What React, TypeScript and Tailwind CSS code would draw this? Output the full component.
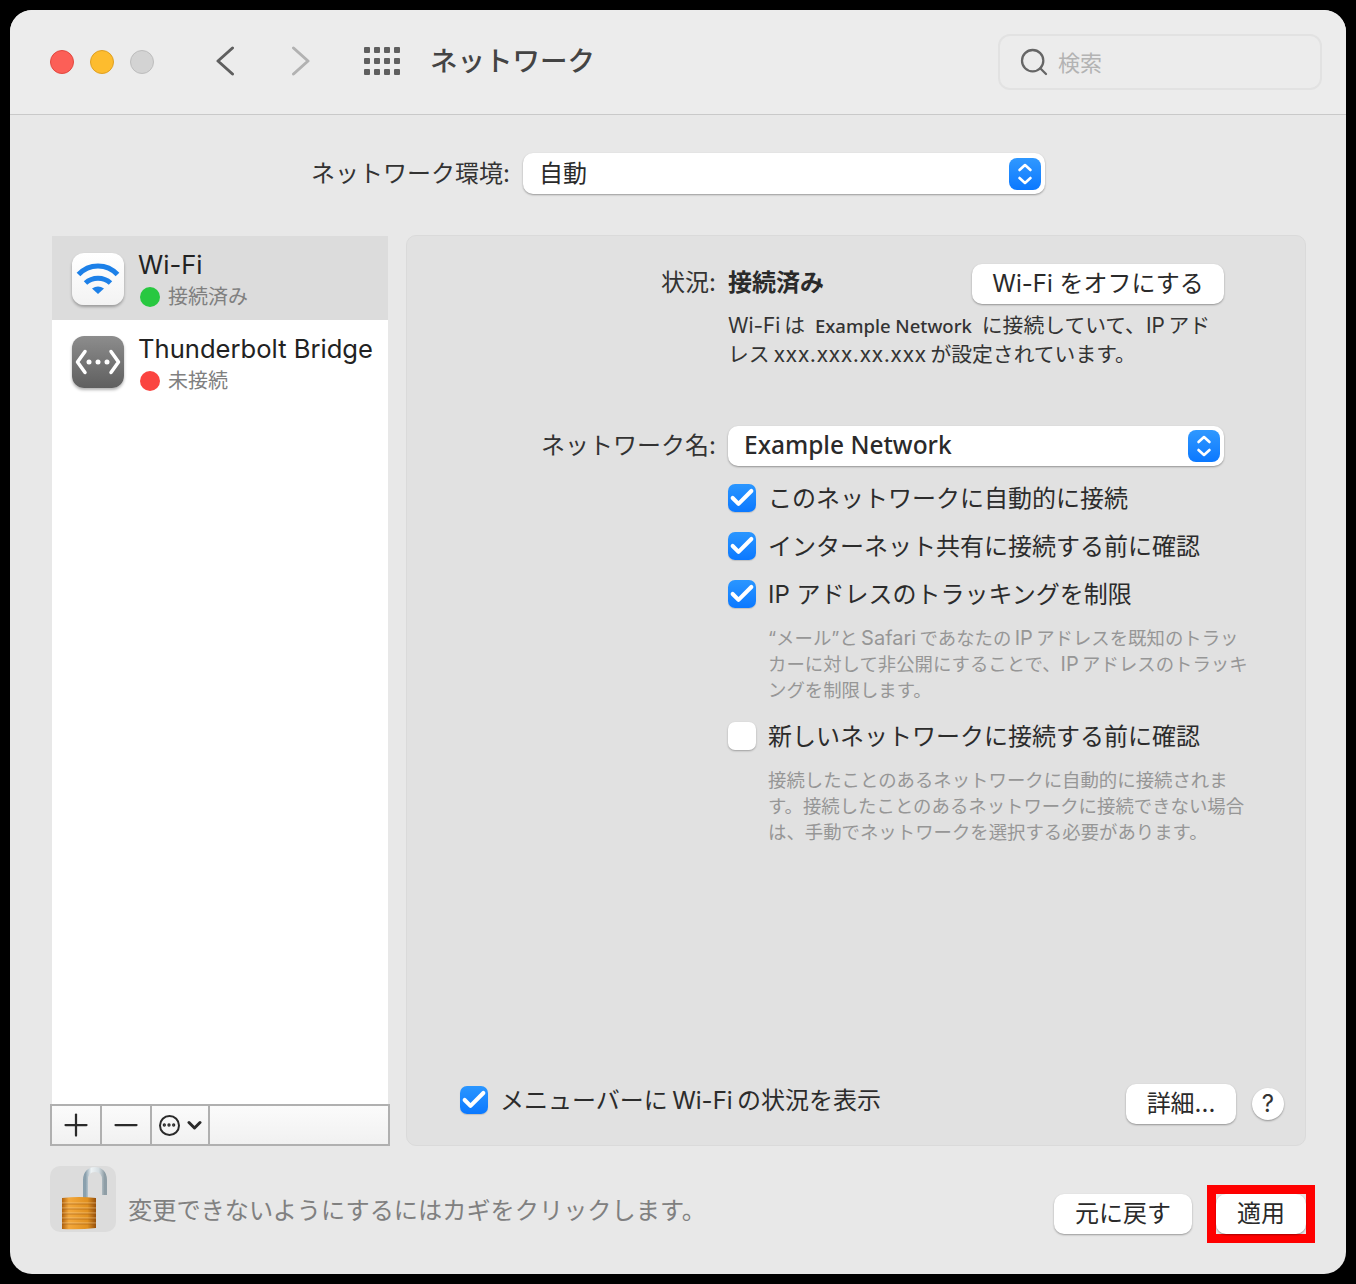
import React from 'react';
import { Check, Ellipsis, Minus, Plus, Search } from 'lucide-react';

const FONT = "font-['Inter','Noto_Sans_CJK_JP',sans-serif]";
const THIN = '\u2009';

const Updown = ({ className = '' }: { className?: string }) => (
  <div className={`w-8 h-8 rounded-lg bg-gradient-to-b from-[#2f98ff] to-[#0a78ff] flex items-center justify-center ${className}`}>
    <svg width="18" height="24" viewBox="0 0 18 24" fill="none" stroke="#fff" strokeWidth="2.6" strokeLinecap="round" strokeLinejoin="round">
      <path d="M3.5 8 9 3l5.500 5" />
      <path d="M3.500 16 9 21l5.500-5" />
    </svg>
  </div>
);

const PopButton = ({ className = '', children }: { className?: string; children: React.ReactNode }) => (
  <button className={`h-10 rounded-[10px] bg-white shadow-[0_1px_2px_rgba(0,0,0,0.35)] text-[24px] text-[#2a2a2a] flex items-center justify-center ${className}`}>
    {children}
  </button>
);

const CheckRow = ({ checked = true, children }: { checked?: boolean; children: React.ReactNode }) => (
  <div className="h-12 flex items-center">
    {checked ? (
      <div className="w-7 h-7 rounded-[7px] bg-gradient-to-b from-[#2a96ff] to-[#0a78ff] flex items-center justify-center shadow-[0_1px_1px_rgba(0,0,0,0.15)]">
        <Check className="w-7 h-7 text-white shrink-0" strokeWidth={3.5} />
      </div>
    ) : (
      <div className="w-7 h-7 rounded-[7px] bg-white shadow-[0_1px_2px_rgba(0,0,0,0.3)]" />
    )}
    <span className="ml-3 pt-[2px] text-[24px] leading-8 text-[#2c2c2c]">{children}</span>
  </div>
);

const NavChevron = ({ d, color, className = '' }: { d: string; color: string; className?: string }) => (
  <svg width="20" height="30" viewBox="0 0 20 30" fill="none" stroke={color} strokeWidth="3" strokeLinecap="round" strokeLinejoin="round" className={className}>
    <path d={d} />
  </svg>
);

const WifiIcon = () => (
  <div className="w-[52px] h-[52px] rounded-xl bg-gradient-to-b from-white to-[#f3f3f3] shadow-[0_2px_3px_rgba(0,0,0,0.3)] flex items-center justify-center">
    <svg width="46" height="34" viewBox="0 0 46 34" fill="none" stroke="#1c80e8" strokeWidth="5">
      <path d="M3.500 12.500C14 1 32 1 42.500 12.500" />
      <path d="M10.500 21C17.500 14.500 28.500 14.500 35.500 21" />
      <path d="M23 32l-6-5.500q6-4 12 0z" fill="#1c80e8" stroke="none" />
    </svg>
  </div>
);

const BridgeIcon = () => (
  <div className="w-[52px] h-[52px] rounded-xl bg-gradient-to-b from-[#8d8d8d] to-[#5f5f5f] shadow-[0_2px_3px_rgba(0,0,0,0.3)] flex items-center justify-center">
    <svg width="46" height="26" viewBox="0 0 46 26" fill="none" stroke="#fff" strokeWidth="3.500" strokeLinecap="round" strokeLinejoin="round">
      <path d="M10 2.500 2.500 13 10 23.500" />
      <path d="M36 2.500 43.500 13 36 23.500" />
      <circle cx="14" cy="13" r="2.500" fill="#fff" stroke="none" />
      <circle cx="23" cy="13" r="2.500" fill="#fff" stroke="none" />
      <circle cx="32" cy="13" r="2.500" fill="#fff" stroke="none" />
    </svg>
  </div>
);

const LockIcon = () => (
  <div className="w-[66px] h-[66px] rounded-[10px] bg-[#dcdcdc] shrink-0">
    <svg width="66" height="66" viewBox="0 0 66 66" fill="none">
      <defs>
        <linearGradient id="shackle" x1="0" y1="0" x2="1" y2="0">
          <stop offset="0" stopColor="#8aa0ad" />
          <stop offset="0.3" stopColor="#eef3f5" />
          <stop offset="0.7" stopColor="#d5dde1" />
          <stop offset="1" stopColor="#8f9ea6" />
        </linearGradient>
        <linearGradient id="brass" x1="0" y1="0" x2="1" y2="0">
          <stop offset="0" stopColor="#b0620f" />
          <stop offset="0.2" stopColor="#f3a83c" />
          <stop offset="0.75" stopColor="#e0901f" />
          <stop offset="1" stopColor="#96500c" />
        </linearGradient>
      </defs>
      <path d="M35.500 32V14C35.500 7 40 3.500 45 3.500S54.500 7 54.500 14v15" stroke="url(#shackle)" strokeWidth="5" />
      <path d="M12 32q17-2 34 0v30q-17 2-34 1z" fill="url(#brass)" />
      <path d="M12 37h34M12 42h34M12 47h34M12 52h34M12 57h34" stroke="#f8cf8f" strokeOpacity="0.6" strokeWidth="1" />
      <path d="M12 38h34M12 43h34M12 48h34M12 53h34M12 58h34" stroke="#9a5510" strokeOpacity="0.5" strokeWidth="1" />
    </svg>
  </div>
);

export default function App() {
  return (
    <div className={`min-h-screen h-[1284px] bg-black p-2.5 ${FONT}`}>
      <div className="w-[1336px] h-[1264px] rounded-[22px] bg-[#e8e8e8] overflow-hidden flex flex-col">
        {/* Title bar */}
        <div className="h-[105px] shrink-0 bg-[#ececec] border-b border-[#c9c9c9] flex items-center pl-10 pr-6">
          <div className="flex gap-4">
            <div className="w-6 h-6 rounded-full bg-[#fc5f57] border border-[#e2483f]" />
            <div className="w-6 h-6 rounded-full bg-[#fdbc2e] border border-[#dfa023]" />
            <div className="w-6 h-6 rounded-full bg-[#d3d3d3] border border-[#bdbdbd]" />
          </div>
          <NavChevron className="ml-[61px] -mt-[2px]" d="M17.500 2 3 15l14.500 13" color="#5f5f5f" />
          <NavChevron className="ml-[56px] -mt-[2px]" d="M2.500 2 17 15 2.500 28" color="#b2b2b2" />
          <div className="ml-[53px] -mt-[2px] grid grid-cols-4 gap-x-1 gap-y-[5px]">
            {Array.from({ length: 12 }).map((_, i) => (
              <div key={i} className="w-[6px] h-[6px] rounded-[1px] bg-[#5f5f5f]" />
            ))}
          </div>
          <div className="ml-[30px] text-[27.5px] font-medium text-[#444]">ネットワーク</div>
          <div className="ml-auto w-[324px] h-14 rounded-xl border-2 border-[#e2e2e2] flex items-center pl-[18px]">
            <Search className="w-8 h-8 text-[#666]" strokeWidth={1.7} />
            <span className="ml-2 pt-[2px] text-[22px] text-[#b3b3b3]">検索</span>
          </div>
        </div>

        {/* Body */}
        <div className="flex-1 px-10 pt-[38px]">
          <div className="flex items-center h-[41px]">
            <div className="w-[460px] text-right text-[24px] text-[#333]">ネットワーク環境:</div>
            <div className="ml-[13px] w-[522px] h-[41px] rounded-[10px] bg-white shadow-[0_1px_2px_rgba(0,0,0,0.35)] flex items-center pl-4 pr-1">
              <span className="text-[24px] text-[#2a2a2a]">自動</span>
              <Updown className="ml-auto" />
            </div>
          </div>

          <div className="mt-[41px] flex gap-4 h-[911px]">
            {/* Sidebar */}
            <div className="w-[340px] flex flex-col">
              <div className="flex-1 bg-white mx-[2px] mt-[1px]">
                <div className="h-[84px] bg-[#dcdcdc] flex items-start pl-5 pt-[17px]">
                  <WifiIcon />
                  <div className="ml-[14px] -mt-[4px]">
                    <div className="text-[25.6px] leading-8 text-[#222]">Wi-Fi</div>
                    <div className="flex items-center mt-1">
                      <div className="w-5 h-5 rounded-full bg-[#28c840] ml-[2px]" />
                      <span className="ml-2 text-[20px] leading-6 text-[#808080]">接続済み</span>
                    </div>
                  </div>
                </div>
                <div className="h-[84px] flex items-start pl-5 pt-4">
                  <BridgeIcon />
                  <div className="ml-[14px] -mt-[3px]">
                    <div className="text-[25.6px] leading-8 text-[#222] whitespace-nowrap">Thunderbolt Bridge</div>
                    <div className="flex items-center mt-1">
                      <div className="w-5 h-5 rounded-full bg-[#fb4440] ml-[2px]" />
                      <span className="ml-2 text-[20px] leading-6 text-[#808080]">未接続</span>
                    </div>
                  </div>
                </div>
              </div>
              <div className="h-[42px] border-2 border-[#b0b0b0] bg-gradient-to-b from-[#fbfbfb] to-[#f1f1f1] flex">
                <div className="w-[50px] border-r-2 border-[#b0b0b0] flex items-center justify-center">
                  <Plus className="w-[36px] h-[36px] text-[#2a2a2a] shrink-0" strokeWidth={1.5} />
                </div>
                <div className="w-[50px] border-r-2 border-[#b0b0b0] flex items-center justify-center">
                  <Minus className="w-[36px] h-[36px] text-[#2a2a2a] shrink-0" strokeWidth={1.5} />
                </div>
                <div className="w-[58px] border-r-2 border-[#b0b0b0] flex items-center justify-center gap-[7px]">
                  <div className="w-[21px] h-[21px] rounded-full border-2 border-[#2a2a2a] flex items-center justify-center">
                    <Ellipsis className="w-4 h-4 text-[#2a2a2a]" strokeWidth={3} />
                  </div>
                  <svg width="15" height="10" viewBox="0 0 15 10" fill="none" stroke="#2a2a2a" strokeWidth="3" strokeLinecap="round" strokeLinejoin="round">
                    <path d="M2 2.500 7.500 8 13 2.500" />
                  </svg>
                </div>
              </div>
            </div>

            {/* Wi-Fi pane */}
            <div className="w-[900px] rounded-[10px] bg-[#e1e1e1] border border-[#dadada] flex flex-col">
              <div className="pt-[28px] flex-1">
                <div className="flex">
                  <div className="w-[309px] h-10 pb-[2px] flex items-center justify-end text-[24px] text-[#333]">状況:</div>
                  <div className="ml-3 w-[496px]">
                    <div className="flex items-center justify-between h-10">
                      <span className="pb-[2px] text-[24px] font-bold text-[#2a2a2a]">接続済み</span>
                      <PopButton className="w-[252px]">Wi-Fi をオフにする</PopButton>
                    </div>
                    <div className="mt-2 text-[20.800px] leading-7 text-[#333] whitespace-nowrap">
                      Wi-Fi{THIN}は<span className="ml-[10px] mr-[10px] font-['Noto_Sans','Noto_Sans_CJK_JP',sans-serif] font-medium text-[18.500px]">Example Network</span>に接続していて、IP{THIN}アド<br />
                      レス{THIN}<span className="text-[21.500px] tracking-[0.4px]">xxx.xxx.xx.xxx</span>{THIN}が設定されています。
                    </div>
                  </div>
                </div>

                <div className="flex mt-[57px]">
                  <div className="w-[309px] h-10 flex items-center justify-end text-[24px] text-[#333]">ネットワーク名:</div>
                  <div className="ml-3 w-[496px] h-10 rounded-[10px] bg-white shadow-[0_1px_2px_rgba(0,0,0,0.35)] flex items-center pl-4 pr-1">
                    <span className="pb-[2px] font-['Noto_Sans','Noto_Sans_CJK_JP',sans-serif] font-medium text-[24.500px] text-[#2a2a2a]">Example Network</span>
                    <Updown className="ml-auto" />
                  </div>
                </div>

                <div className="ml-[321px] mt-2">
                  <CheckRow>このネットワークに自動的に接続</CheckRow>
                  <CheckRow>インターネット共有に接続する前に確認</CheckRow>
                  <CheckRow>IP アドレスのトラッキングを制限</CheckRow>
                  <div className="ml-10 mt-[7px] text-[18.400px] leading-[26px] text-[#969696] whitespace-nowrap">
                    “メール”と{THIN}<span className="text-[20px]">Safari</span>{THIN}であなたの{THIN}<span className="text-[20px]">IP</span>{THIN}アドレスを既知のトラッ<br />
                    カーに対して非公開にすることで、<span className="text-[20px]">IP</span>{THIN}アドレスのトラッキ<br />
                    ングを制限します。
                  </div>
                  <div className="mt-[9px]">
                    <CheckRow checked={false}>新しいネットワークに接続する前に確認</CheckRow>
                  </div>
                  <div className="ml-10 mt-[7px] text-[18.400px] leading-[26px] text-[#969696] whitespace-nowrap">
                    接続したことのあるネットワークに自動的に接続されま<br />
                    す。接続したことのあるネットワークに接続できない場合<br />
                    は、手動でネットワークを選択する必要があります。
                  </div>
                </div>
              </div>

              <div className="h-[60px] mb-[11px] pl-[53px] pr-[21px] flex items-center">
                <div className="-mt-2">
                  <CheckRow>メニューバーに{THIN}Wi-Fi{THIN}の状況を表示</CheckRow>
                </div>
                <PopButton className="ml-auto w-[110px]">詳細...</PopButton>
                <button className="ml-4 w-8 h-8 rounded-full bg-white shadow-[0_1px_2px_rgba(0,0,0,0.35)] text-[24px] leading-none text-[#333]">?</button>
              </div>
            </div>
          </div>

          {/* Footer */}
          <div className="mt-5 flex items-start">
            <LockIcon />
            <div className="ml-3 mt-[29px] text-[24.200px] leading-8 text-[#808080]">変更できないようにするにはカギをクリックします。</div>
            <PopButton className="ml-auto mt-7 w-[138px]">元に戻す</PopButton>
            <div className="ml-[15px] -mr-[9px] mt-[19px] w-[108px] h-[58px] border-[9px] border-[#ff0000] bg-[#e8e8e8]">
              <PopButton className="w-[90px]">適用</PopButton>
            </div>
          </div>
        </div>
      </div>
    </div>
  );
}
